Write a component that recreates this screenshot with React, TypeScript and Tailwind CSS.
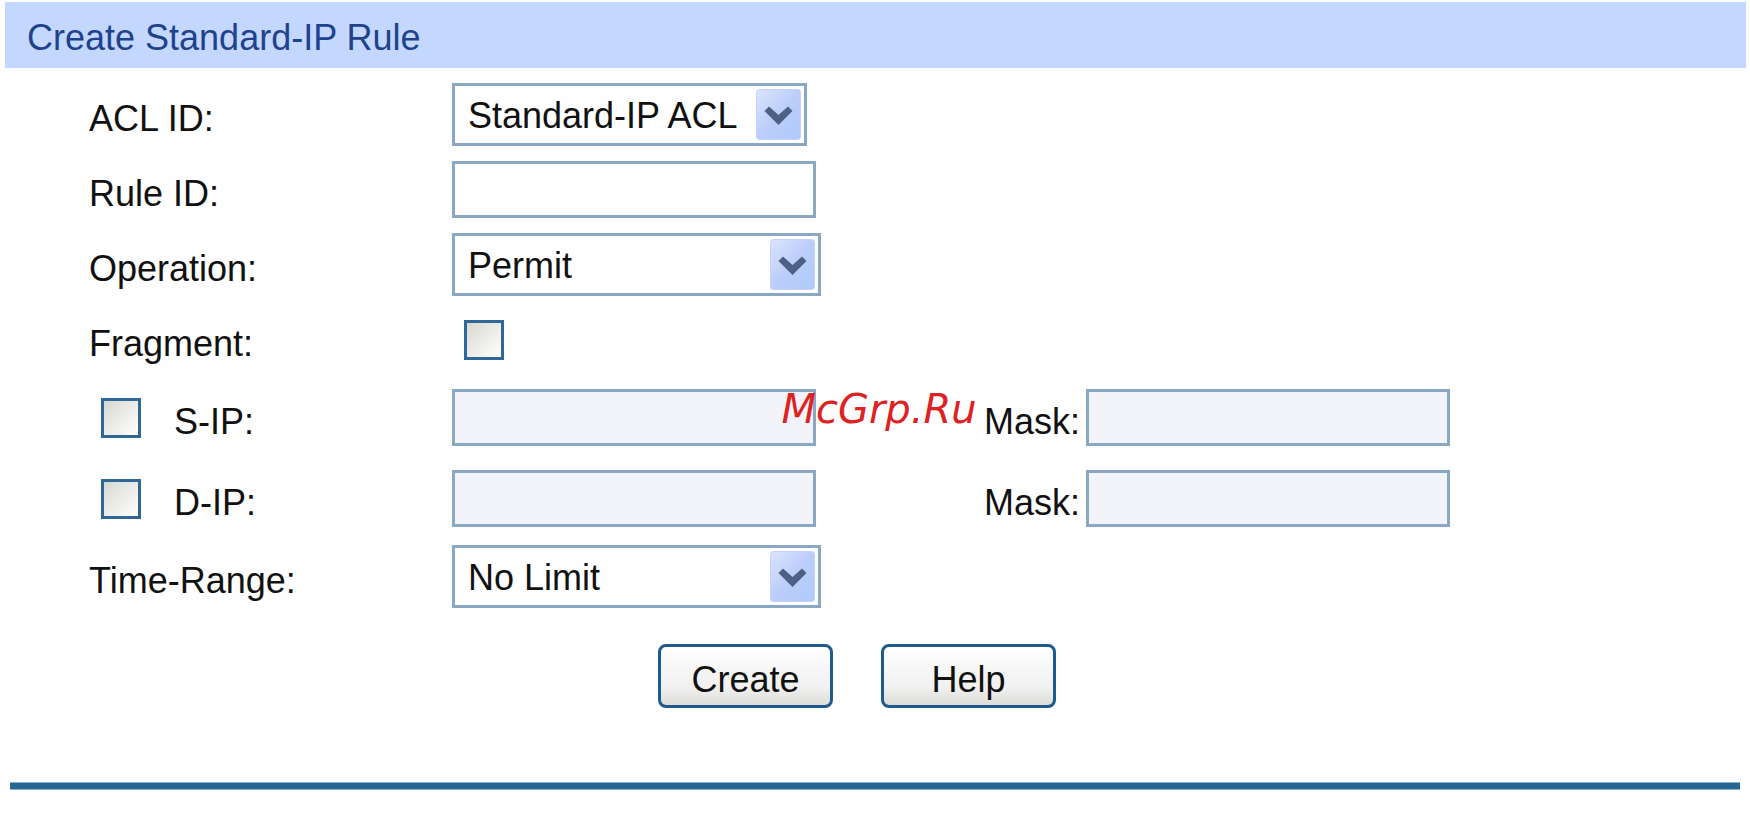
import React, { useState } from "react";
import clsx from "clsx";

type RowProps = {
  tall?: boolean
  label: React.ReactNode
  children: React.ReactNode
}

// one line of the form: label column on the left, control on the right
function Row( {tall,label,children}: RowProps ){
  return (
    <div className={clsx('grid grid-cols-[363px_1fr] items-center', tall ? 'h-[81px]' : 'h-[75px]')}>
      <div className="flex items-center">{label}</div>
      <div className="flex items-center">{children}</div>
    </div>
  )
}

function Label( {htmlFor,children}: { htmlFor: string, children: React.ReactNode } ){
  return <label htmlFor={htmlFor} className="pt-2 leading-10 whitespace-nowrap">{children}</label>
}

type SelectProps = {
  id: string
  options: string[]
  className: string
}

// native select with the XP style arrow button laid over its right end
function Select( {id,options,className}: SelectProps ){
  return (
    <div className={clsx('relative', className)}>
      <select
        id={id}
        className="block h-[63px] w-full appearance-none border-3 border-[#8ba8c3] bg-[#fefefe] pt-0.5 pl-[13px] pr-[52px] leading-10"
      >
        {options.map((option) => <option key={option}>{option}</option>)}
      </select>
      <svg className="pointer-events-none absolute top-[6px] right-[6px]" width="45" height="51" viewBox="0 0 45 51">
        <defs>
          <linearGradient id={`${id}-arrow`} x1="0" y1="0" x2="1" y2="1">
            <stop offset="0" stopColor="#dae5ff" />
            <stop offset="0.5" stopColor="#bccdfa" />
            <stop offset="1" stopColor="#aecbfb" />
          </linearGradient>
        </defs>
        <rect x="0.5" y="0.5" width="44" height="50" rx="3" fill={`url(#${id}-arrow)`} stroke="#c3d1fa" />
        <path d="M8.500 22L13 17.500L22.500 26L32 17.500L36.500 22L22.500 36Z" fill="#4d6185" />
      </svg>
    </div>
  )
}

function TextBox( {id,disabled}: { id: string, disabled?: boolean } ){
  return (
    <input
      id={id}
      type="text"
      disabled={disabled}
      className="h-[57px] w-[364px] border-3 border-[#8ba8c3] bg-[#fefefe] px-3 disabled:bg-[#f3f4fa]"
    />
  )
}

type CheckboxProps = {
  id: string
  checked: boolean
  onChange: (checked: boolean) => void
}

function Checkbox( {id,checked,onChange}: CheckboxProps ){
  return (
    <span className="grid ml-3">
      <input
        id={id}
        type="checkbox"
        checked={checked}
        onChange={(e) => onChange(e.target.checked)}
        className="col-start-1 row-start-1 size-10 appearance-none border-3 border-[#2f6797] bg-linear-to-br from-[#d8d8d2] to-white"
      />
      {checked &&
        <svg className="pointer-events-none col-start-1 row-start-1 size-10" viewBox="0 0 40 40">
          <path d="M11 18L18 25L30 13" fill="none" stroke="#21a121" strokeWidth="6" />
        </svg>
      }
    </span>
  )
}

// S-IP and D-IP rows, the boxes stay disabled until the row is ticked
function AddressRow( {id,label}: { id: string, label: string } ){
  const [enabled, setEnabled] = useState(false);

  return (
    <Row
      tall
      label={
        <div className="flex items-center gap-[33px]">
          <Checkbox id={`${id}-on`} checked={enabled} onChange={setEnabled} />
          <Label htmlFor={`${id}-on`}>{label}</Label>
        </div>
      }
    >
      <div className="w-[532px]">
        <TextBox id={id} disabled={!enabled} />
      </div>
      <div className="flex items-center gap-1.5">
        <Label htmlFor={`${id}-mask`}>Mask:</Label>
        <TextBox id={`${id}-mask`} disabled={!enabled} />
      </div>
    </Row>
  )
}

function FormButton( {label,type}: { label: string, type: 'submit' | 'button' } ){
  return (
    <button
      type={type}
      className="h-16 w-[175px] rounded-lg border-3 border-[#1f5a8f] bg-linear-to-b from-white via-[#f0f0f0] via-70% to-[#dcdcd8] pt-2 leading-10"
    >
      {label}
    </button>
  )
}

export default function App() {
  const [fragment, setFragment] = useState(false);

  return (
    <main className="relative min-h-screen bg-[#fefefe] pt-0.5 font-['Liberation_Sans',Arial,sans-serif] text-4xl text-[#111]">
      <h1 className="mr-1 ml-[5px] h-[66px] bg-[#c4d8ff] pt-4 pl-[22px] leading-10 text-[#1f428c]">
        Create Standard-IP Rule
      </h1>

      <form className="pt-[9px]" onSubmit={(e) => e.preventDefault()}>
        <div className="pl-[89px]">
          <Row label={<Label htmlFor="acl-id">ACL ID:</Label>}>
            <Select id="acl-id" className="w-[355px]" options={['Standard-IP ACL']} />
          </Row>
          <Row label={<Label htmlFor="rule-id">Rule ID:</Label>}>
            <TextBox id="rule-id" />
          </Row>
          <Row label={<Label htmlFor="operation">Operation:</Label>}>
            <Select id="operation" className="w-[369px]" options={['Permit', 'Deny']} />
          </Row>
          <Row label={<Label htmlFor="fragment">Fragment:</Label>}>
            <Checkbox id="fragment" checked={fragment} onChange={setFragment} />
          </Row>
          <AddressRow id="s-ip" label="S-IP:" />
          <AddressRow id="d-ip" label="D-IP:" />
          <Row label={<Label htmlFor="time-range">Time-Range:</Label>}>
            <Select id="time-range" className="w-[369px]" options={['No Limit']} />
          </Row>
        </div>

        <div className="flex justify-center gap-12 pt-[30px] pr-9">
          <FormButton type="submit" label="Create" />
          <FormButton type="button" label="Help" />
        </div>
      </form>

      <hr className="mt-[74px] mr-2.5 ml-2.5 h-2 border-y border-[#8fb0c8] bg-[#256694]" />

      {/* watermark */}
      <div className="pointer-events-none absolute inset-0 flex items-center justify-center pt-1 pl-2">
        <span className="font-['DejaVu_Sans',sans-serif] text-[40px] leading-10 text-[#dc2222] italic">McGrp.Ru</span>
      </div>
    </main>
  );
}
